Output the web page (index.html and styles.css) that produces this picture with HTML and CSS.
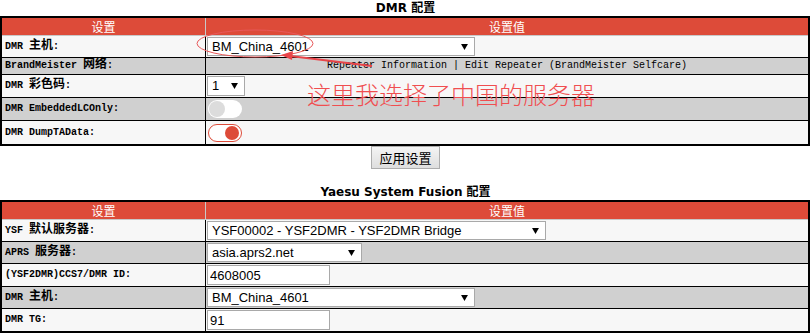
FILE: index.html
```html
<!DOCTYPE html>
<html lang="zh-CN">
<head>
    <meta charset="UTF-8">
    <meta name="viewport" content="width=device-width, initial-scale=1.0">
    <title>Pi-Star 配置</title>
    <link rel="stylesheet" href="styles.css">
</head>
<body>
    <div class="section">
        <h2 class="title">DMR 配置</h2>
        <table class="settings">
            <tr>
                <th class="col-key">设置</th>
                <th>设置值</th>
            </tr>
            <tr class="light">
                <td class="key">DMR <span class="cn">主机</span>:</td>
                <td class="value">
                    <div class="select w-host"><span>BM_China_4601</span><svg class="arrow" viewBox="0 0 8 7"><polygon points="0,0 8,0 4,7"/></svg></div>
                </td>
            </tr>
            <tr class="dark">
                <td class="key">BrandMeister <span class="cn">网络</span>:</td>
                <td class="value links"><a href="#">Repeater Information</a> | <a href="#">Edit Repeater (BrandMeister Selfcare)</a></td>
            </tr>
            <tr class="light">
                <td class="key">DMR <span class="cn">彩色码</span>:</td>
                <td class="value">
                    <div class="select w-cc"><span>1</span><svg class="arrow" viewBox="0 0 8 7"><polygon points="0,0 8,0 4,7"/></svg></div>
                </td>
            </tr>
            <tr class="dark">
                <td class="key">DMR EmbeddedLCOnly:</td>
                <td class="value"><span class="toggle"></span></td>
            </tr>
            <tr class="light">
                <td class="key">DMR DumpTAData:</td>
                <td class="value"><span class="toggle on"></span></td>
            </tr>
        </table>
        <div class="actions"><button>应用设置</button></div>
    </div>

    <div class="section">
        <h2 class="title">Yaesu System Fusion 配置</h2>
        <table class="settings">
            <tr>
                <th class="col-key">设置</th>
                <th>设置值</th>
            </tr>
            <tr class="light">
                <td class="key">YSF <span class="cn">默认服务器</span>:</td>
                <td class="value">
                    <div class="select w-ysf"><span>YSF00002 - YSF2DMR - YSF2DMR Bridge</span><svg class="arrow" viewBox="0 0 8 7"><polygon points="0,0 8,0 4,7"/></svg></div>
                </td>
            </tr>
            <tr class="dark">
                <td class="key">APRS <span class="cn">服务器</span>:</td>
                <td class="value">
                    <div class="select w-aprs"><span>asia.aprs2.net</span><svg class="arrow" viewBox="0 0 8 7"><polygon points="0,0 8,0 4,7"/></svg></div>
                </td>
            </tr>
            <tr class="light">
                <td class="key">(YSF2DMR)CCS7/DMR ID:</td>
                <td class="value"><input class="text-input" type="text" value="4608005"></td>
            </tr>
            <tr class="dark">
                <td class="key">DMR <span class="cn">主机</span>:</td>
                <td class="value">
                    <div class="select w-host"><span>BM_China_4601</span><svg class="arrow" viewBox="0 0 8 7"><polygon points="0,0 8,0 4,7"/></svg></div>
                </td>
            </tr>
            <tr class="light">
                <td class="key">DMR TG:</td>
                <td class="value"><input class="text-input" type="text" value="91"></td>
            </tr>
        </table>
        <div class="actions"><button>应用设置</button></div>
    </div>

    <!-- hand-drawn note over the screenshot -->
    <svg class="note-marks" viewBox="0 0 811 333">
        <ellipse cx="255" cy="43.5" rx="58" ry="13.5"/>
        <line x1="372" y1="66" x2="290" y2="56"/>
        <polygon class="head" points="281,55 293,51 292,60"/>
    </svg>
    <div class="note-text">这里我选择了中国的服务器</div>
</body>
</html>
```

FILE: styles.css
```css
body {
    margin: 0;
    position: relative;
    font-family: "Liberation Sans", Arial, "Noto Sans CJK SC", sans-serif;
    font-size: 12px;
    color: #000;
    background: #fff;
}
.title {
    margin: 0;
    font-family: "DejaVu Sans", "Noto Sans CJK SC", sans-serif;
    font-size: 12px;
    font-weight: bold;
    line-height: 16px;
    text-align: center;
}
.settings {
    width: 810px;
    border-collapse: collapse;
    border: 2px solid #000;
}
.settings th {
    height: 17px;
    background: #dd4b39;
    color: #fff;
    font-family: "Noto Sans CJK SC", sans-serif;
    font-weight: normal;
    font-size: 12px;
    line-height: 15px;
    padding: 0;
    border-left: 1px solid #c8c8c8;
    border-bottom: 1px solid #c8c8c8;
}
.settings th.col-key {
    width: 203px;
    border-left: none;
}
.settings td {
    border: 1px solid #000;
    line-height: 14px;
    vertical-align: middle;
}
.light td {
    background: #f7f7f7;
}
.dark td {
    background: #d0d0d0;
}
.key {
    height: 14px;
    padding: 1px 3px;
    font-family: "Liberation Mono", "Noto Sans CJK SC", monospace;
    font-size: 10px;
    font-weight: bold;
    white-space: nowrap;
}
.key .cn {
    font-family: "Noto Sans CJK SC", sans-serif;
    font-size: 12px;
    line-height: 8px;
}
.value {
    padding: 1px;
}
.links {
    text-align: center;
    font-family: "Liberation Mono", monospace;
    font-size: 10px;
}
.links a {
    color: #000;
    text-decoration: none;
}
.select {
    display: flex;
    align-items: center;
    justify-content: space-between;
    box-sizing: border-box;
    height: 19px;
    padding: 0 6px 0 4px;
    border: 1px solid #a9a9a9;
    background: #fff;
    font-family: "Liberation Sans", Arial, sans-serif;
    font-size: 13px;
}
.select .arrow {
    width: 7px;
    height: 6px;
    fill: #000;
}
.w-host {
    width: 268px;
}
.w-cc {
    width: 38px;
    height: 20px;
}
.w-ysf {
    width: 339px;
}
.w-aprs {
    width: 155px;
}
.text-input {
    display: block;
    box-sizing: border-box;
    width: 123px;
    height: 20px;
    margin: 0;
    padding: 0 2px;
    border: 1px solid #a9a9a9;
    background: #fff;
    font-family: "Liberation Sans", Arial, sans-serif;
    font-size: 13px;
    color: #000;
}
.toggle {
    display: block;
    position: relative;
    box-sizing: border-box;
    width: 34px;
    height: 18px;
    margin: 1px 0 1px 1px;
    border-radius: 9px;
    background: #fff;
}
.toggle::after {
    content: "";
    position: absolute;
    top: 1px;
    left: 1px;
    width: 16px;
    height: 16px;
    border-radius: 50%;
    background: #dcdcdc;
}
.toggle.on {
    margin-top: 2px;
    border: 1px solid #dd4b39;
}
.toggle.on::after {
    top: 1px;
    left: auto;
    right: 2px;
    width: 14px;
    height: 14px;
    background: #dd4b39;
}
.actions {
    text-align: center;
    margin-bottom: 15px;
}
.actions button {
    height: 23px;
    margin: 0;
    padding: 0 7px;
    border: 1px solid #adadad;
    background: linear-gradient(#f4f4f4, #dedede);
    font-family: "Noto Sans CJK SC", sans-serif;
    font-size: 13px;
    color: #000;
}
.note-marks {
    position: absolute;
    left: 0;
    top: 0;
    width: 811px;
    height: 333px;
    pointer-events: none;
}
.note-marks ellipse {
    fill: none;
    stroke: #e8595a;
    stroke-width: 1;
}
.note-marks line {
    stroke: #e8454a;
    stroke-width: 2;
}
.note-marks .head {
    fill: #e8454a;
}
.note-text {
    position: absolute;
    left: 307px;
    top: 79px;
    font-family: "Noto Sans CJK SC", sans-serif;
    font-size: 24px;
    font-weight: 300;
    line-height: 30px;
    color: #f04e50;
}
```
